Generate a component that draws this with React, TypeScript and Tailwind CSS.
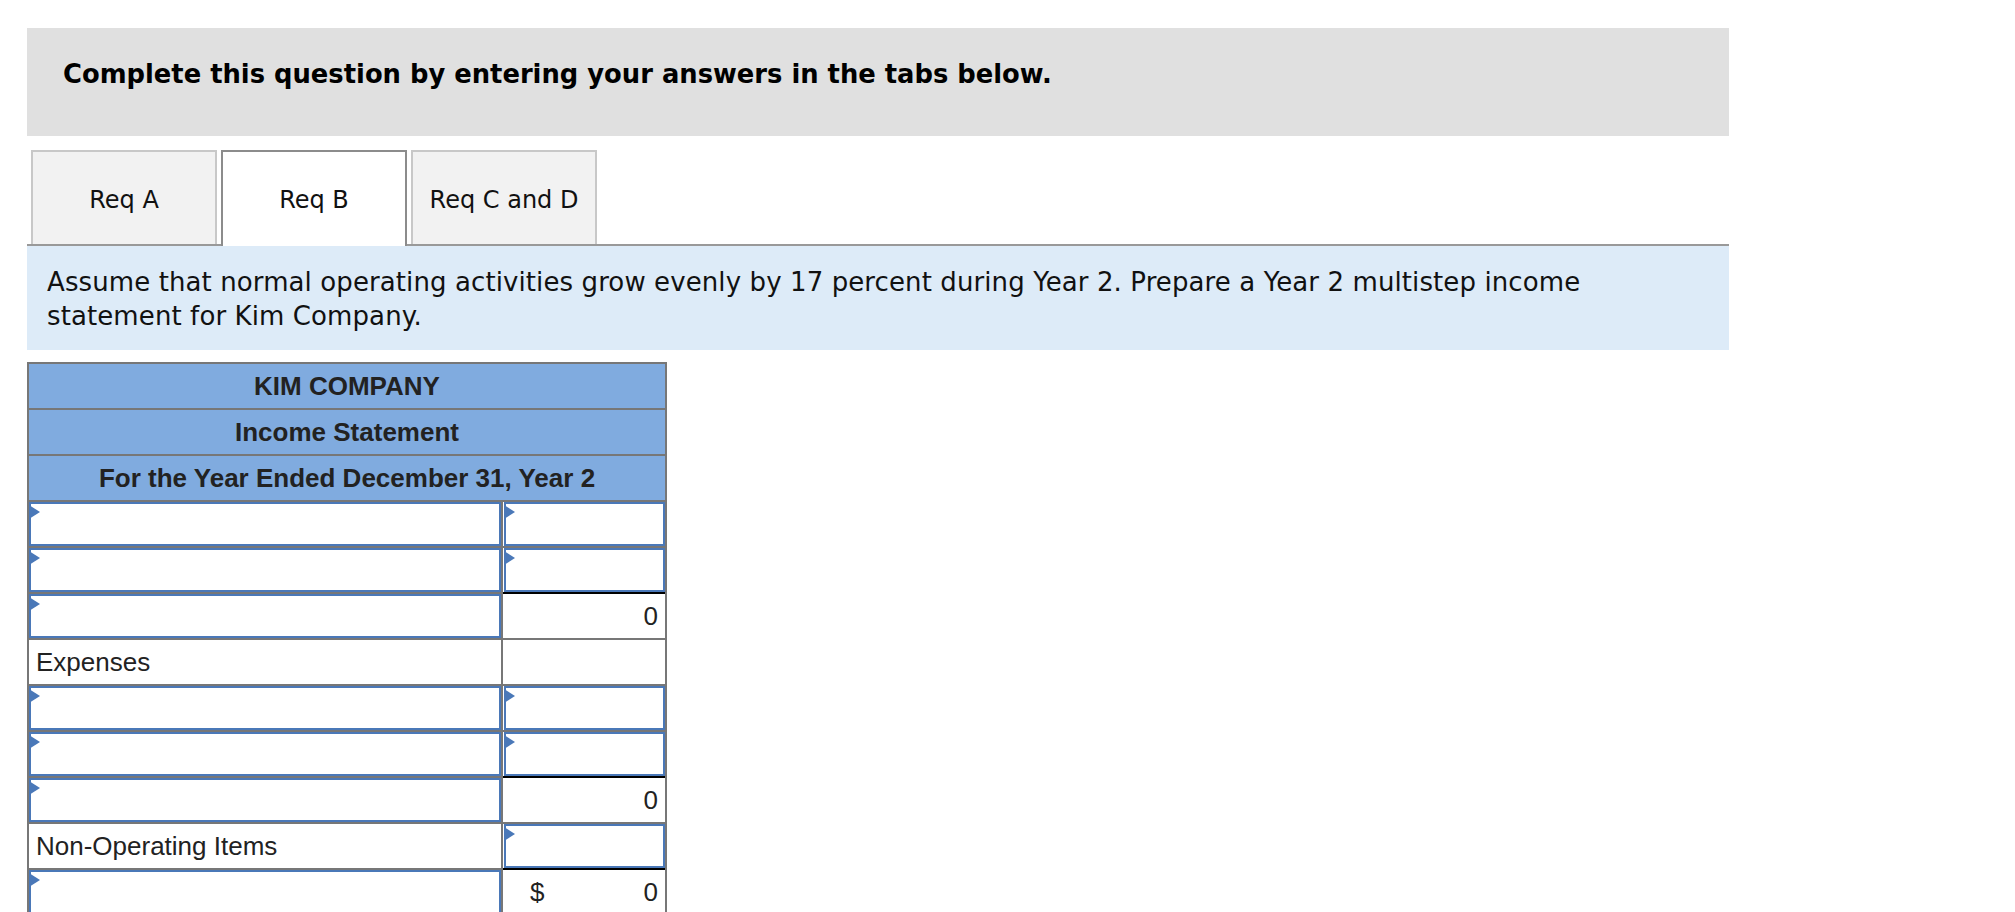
import React from "react";

const verdana = { fontFamily: '"DejaVu Sans", Verdana, sans-serif' };
const arial = { fontFamily: '"Liberation Sans", Arial, sans-serif' };

function Marker() {
  return (
    <div className="absolute -left-[2px] top-[1px] w-0 h-0 border-l-[11px] border-l-[#4a78b8] border-y-[7px] border-y-transparent" />
  );
}

function InputCell() {
  return (
    <div className="relative h-full w-full border-2 border-[#4a78b8] bg-white">
      <Marker />
    </div>
  );
}

type Row = {
  left: "input" | string;
  right: "input" | "empty" | "zero" | "dollar";
};

const rows: Row[] = [
  { left: "input", right: "input" },
  { left: "input", right: "input" },
  { left: "input", right: "zero" },
  { left: "Expenses", right: "empty" },
  { left: "input", right: "input" },
  { left: "input", right: "input" },
  { left: "input", right: "zero" },
  { left: "Non-Operating Items", right: "input" },
  { left: "input", right: "dollar" },
];

function RightCell({ kind }: { kind: Row["right"] }) {
  if (kind === "input") {
    return (
      <div className="w-[162px] h-[44px] pl-px">
        <InputCell />
      </div>
    );
  }
  if (kind === "empty") {
    return <div className="w-[162px] h-[44px]" />;
  }
  if (kind === "zero") {
    return (
      <div className="w-[162px] h-[46px] -mt-[2px] border-t-2 border-black flex items-center justify-end pr-[7px] text-[26px] text-[#222]">
        0
      </div>
    );
  }
  return (
    <div className="w-[162px] h-[48px] -mt-[2px] -mb-[2px] border-y-2 border-black flex items-center justify-between pl-[27px] pr-[7px] text-[26px] text-[#222]">
      <span>$</span>
      <span>0</span>
    </div>
  );
}

export default function App() {
  return (
    <div className="w-[2015px] h-[912px] overflow-hidden bg-white pt-[28px] pl-[27px]">
      <div className="w-[1702px]">
        <div className="h-[108px] bg-[#e0e0e0] pl-[36px] pt-[30px]">
          <h1 className="text-[25.8px] leading-[32px] font-bold text-black" style={verdana}>
            Complete this question by entering your answers in the tabs below.
          </h1>
        </div>

        <div className="mt-[14px] flex items-end gap-[4px] pl-[4px] border-b-2 border-[#999]" style={verdana}>
          <div className="w-[186px] h-[94px] pt-[4px] border-2 border-b-0 border-[#c8c8c8] bg-[#f2f2f2] flex items-center justify-center text-[24px] text-[#111]">
            Req A
          </div>
          <div className="w-[186px] h-[96px] pt-[2px] -mb-[2px] border-2 border-b-0 border-[#8c8c8c] bg-white flex items-center justify-center text-[24px] text-[#111]">
            Req B
          </div>
          <div className="w-[186px] h-[94px] pt-[4px] border-2 border-b-0 border-[#c8c8c8] bg-[#f2f2f2] flex items-center justify-center text-[24px] text-[#111]">
            Req C and D
          </div>
        </div>

        <div className="h-[104px] bg-[#ddebf8] pl-[20px] pr-[47px] pt-[19px]" style={verdana}>
          <p className="text-[26px] leading-[34px] tracking-[0.1px] text-[#111]">
            Assume that normal operating activities grow evenly by 17 percent during Year 2. Prepare a Year 2 multistep income statement for Kim Company.
          </p>
        </div>

        <div className="mt-[12px] w-[640px] border-2 border-b-0 border-[#777]" style={arial}>
          <div className="h-[46px] border-b-2 border-[#777] bg-[#80abdf] flex items-center justify-center text-[26px] font-bold text-[#222]">
            KIM COMPANY
          </div>
          <div className="h-[46px] border-b-2 border-[#777] bg-[#80abdf] flex items-center justify-center text-[26px] font-bold text-[#222]">
            Income Statement
          </div>
          <div className="h-[46px] border-b-2 border-[#777] bg-[#80abdf] flex items-center justify-center text-[26px] font-bold text-[#222]">
            For the Year Ended December 31, Year 2
          </div>
          {rows.map((r, i) => (
            <div key={i} className="flex border-b-2 border-[#777]">
              <div className="w-[474px] h-[44px] border-r-2 border-[#777]">
                {r.left === "input" ? (
                  <InputCell />
                ) : (
                  <div className="h-full flex items-center pl-[7px] text-[26px] text-[#222]">{r.left}</div>
                )}
              </div>
              <RightCell kind={r.right} />
            </div>
          ))}
        </div>
      </div>
    </div>
  );
}
